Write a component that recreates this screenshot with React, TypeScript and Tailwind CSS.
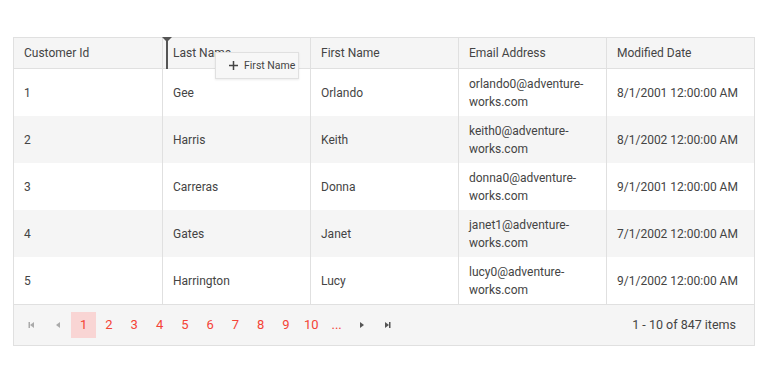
import React from "react";

const rows = [
  ["1", "Gee", "Orlando", ["orlando0@adventure-", "works.com"], "8/1/2001 12:00:00 AM"],
  ["2", "Harris", "Keith", ["keith0@adventure-", "works.com"], "8/1/2002 12:00:00 AM"],
  ["3", "Carreras", "Donna", ["donna0@adventure-", "works.com"], "9/1/2001 12:00:00 AM"],
  ["4", "Gates", "Janet", ["janet1@adventure-", "works.com"], "7/1/2002 12:00:00 AM"],
  ["5", "Harrington", "Lucy", ["lucy0@adventure-", "works.com"], "9/1/2002 12:00:00 AM"],
] as const;

const headers = ["Customer Id", "Last Name", "First Name", "Email Address", "Modified Date"];

function Tri({ dir, bar, color }: { dir: "l" | "r"; bar?: boolean; color: string }) {
  return (
    <svg width="10" height="10" viewBox="0 0 10 10">
      {dir === "l" ? (
        <>
          {bar && <rect x="1.5" y="2" width="1.5" height="6" fill={color} />}
          <polygon points="3,5 7,2 7,8" fill={color} />
        </>
      ) : (
        <>
          <polygon points="7,5 3,2 3,8" fill={color} />
          {bar && <rect x="7" y="2" width="1.5" height="6" fill={color} />}
        </>
      )}
    </svg>
  );
}

export default function App() {
  return (
    <div className="w-[770px] h-[380px] bg-white pt-[37px] pl-[13px]" style={{ fontFamily: "Roboto, 'Liberation Sans', sans-serif" }}>
      <div className="relative w-[742px] border border-[#e0e0e0] text-[12px] text-[#444]">
        <div className="grid grid-cols-5 bg-[#f5f5f5] h-[31px] border-b border-[#e0e0e0]">
          {headers.map((h, i) => (
            <div key={h} className={`flex items-center px-[10px] ${i > 0 ? "border-l border-[#e0e0e0]" : ""}`}>
              {h}
            </div>
          ))}
        </div>
        {rows.map((r, ri) => (
          <div key={ri} className={`grid grid-cols-5 h-[47px] ${ri % 2 === 1 ? "bg-[#f5f5f5]" : "bg-white"}`}>
            {[r[0], r[1], r[2], r[3], r[4]].map((c, i) => (
              <div key={i} className={`flex flex-col justify-center px-[10px] leading-[18px] ${i > 0 ? "border-l border-[#e0e0e0]" : ""}`}>
                {Array.isArray(c) ? (
                  <>
                    <span>{c[0]}</span>
                    <span>{c[1]}</span>
                  </>
                ) : (
                  <span>{c as string}</span>
                )}
              </div>
            ))}
          </div>
        ))}
        <div className="flex items-center justify-between h-[41px] bg-[#f5f5f5] border-t border-[#e0e0e0] pl-[5px] pr-[18px]">
          <div className="flex items-center">
            <div className="w-[26px] h-[26px] flex items-center justify-center"><Tri dir="l" bar color="#aaa" /></div>
            <div className="w-[26px] h-[26px] flex items-center justify-center"><Tri dir="l" color="#aaa" /></div>
            {["1", "2", "3", "4", "5", "6", "7", "8", "9", "10", "..."].map((p, i) => (
              <div
                key={p}
                className={`w-[25.3px] h-[26px] flex items-center justify-center text-[13px] text-[#f44336] ${i === 0 ? "bg-[#f9d5d4]" : ""}`}
              >
                {p}
              </div>
            ))}
            <div className="w-[25px] h-[26px] flex items-center justify-center"><Tri dir="r" color="#555" /></div>
            <div className="w-[25px] h-[26px] flex items-center justify-center"><Tri dir="r" bar color="#555" /></div>
          </div>
          <div className="text-[12.5px] text-[#444]">1 - 10 of 847 items</div>
        </div>

        {/* drop indicator */}
        <div className="absolute left-[152px] top-[-1px] w-[2px] h-[32px] bg-[#555]" />
        <svg className="absolute left-[148px] top-[-1px]" width="10" height="6" viewBox="0 0 10 6">
          <polygon points="0,0 10,0 5,5" fill="#555" />
        </svg>
        {/* drag clue */}
        <div className="absolute left-[201px] top-[14px] w-[84px] h-[27px] bg-[#f7f7f7] border border-[#e0e0e0] shadow-[0_1px_2px_rgba(0,0,0,0.08)] flex items-center pl-[13px] gap-[6px] text-[10.5px] text-[#444]">
          <svg width="9" height="9" viewBox="0 0 9 9">
            <rect x="3.75" y="0" width="1.5" height="9" fill="#444" />
            <rect x="0" y="3.75" width="9" height="1.5" fill="#444" />
          </svg>
          <span>First Name</span>
        </div>
      </div>
    </div>
  );
}
